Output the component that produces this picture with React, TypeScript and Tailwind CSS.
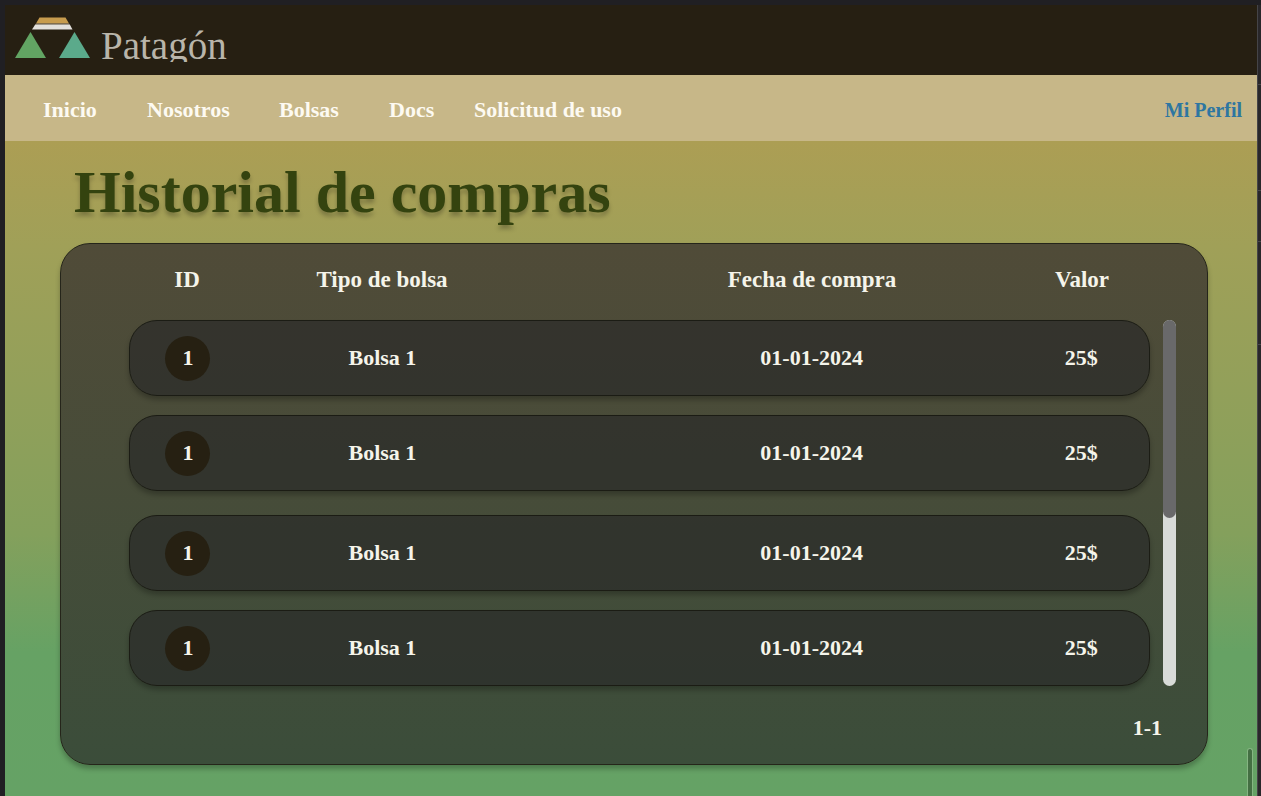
import React from "react";

type Purchase = { id: number; bag: string; date: string; value: string };

const purchase: Purchase = { id: 1, bag: "Bolsa 1", date: "01-01-2024", value: "25$" };
const groups: Purchase[][] = [
  [purchase, purchase],
  [purchase, purchase],
];

const links = ["Inicio", "Nosotros", "Bolsas", "Docs", "Solicitud de uso"];

const rowGrid = "grid grid-cols-[116fr_365fr_404fr_136fr] items-center text-center";

function Logo() {
  return (
    <svg width="76" height="42" viewBox="0 0 76 42" aria-hidden="true">
      <path d="M24.5 0.5H50.5L54 6.5H21Z" fill="#c79c4e" />
      <path d="M21 6.5H54L54.6 7.6H20.4Z" fill="#8d8069" />
      <path d="M20.2 7.6H54.8L57.5 12.5H17Z" fill="#e2e0dc" />
      <path d="M15.5 15L31 41H0Z" fill="#62a463" />
      <path d="M59.5 15L75 41H44Z" fill="#5baa8b" />
    </svg>
  );
}

function Header() {
  return (
    <header>
      <div className="flex h-[70px] items-start bg-[#261f12] pt-3 pl-[10px]">
        <a href="#" className="flex items-start gap-[10px]">
          <Logo />
          <span className="h-[45px] overflow-hidden pt-2 text-[39px] leading-[42px] text-[#b9b5aa]">
            Patagón
          </span>
        </a>
      </div>
      <nav className="flex h-[66px] items-center justify-between bg-[#c7b788] pt-[3px] pr-[15px] pl-[38px] font-bold">
        <ul className="grid grid-cols-[104px_132px_110px_85px_auto] text-[22px] text-[#fdfaf2]">
          {links.map((l) => (
            <li key={l}>
              <a href="#">{l}</a>
            </li>
          ))}
        </ul>
        <a href="#" className="text-[20px] text-[#2e76a1]">
          Mi Perfil
        </a>
      </nav>
    </header>
  );
}

function PurchaseRow({ item }: { item: Purchase }) {
  return (
    <tr
      className={`${rowGrid} h-[76px] rounded-[28px] border border-[#1b1c14] bg-[#292828]/67 shadow-[0_4px_5px_rgba(0,0,0,0.25)]`}
    >
      <td className="flex justify-center">
        <span className="flex size-[45px] items-center justify-center rounded-full bg-[#262012]">
          {item.id}
        </span>
      </td>
      <td className="pr-[91px]">{item.bag}</td>
      <td>{item.date}</td>
      <td>{item.value}</td>
    </tr>
  );
}

function History() {
  return (
    <section className="mr-[49px] ml-[55px] rounded-[30px] border border-[#25251a] bg-linear-to-b from-[#504b38] to-[#3b4d3a] text-[22px] leading-7 font-bold text-[#f5f4ea] shadow-[0_4px_5px_rgba(0,0,0,0.25)]">
      <div className="flex gap-[13px] pr-[31px] pl-[68px]">
        <table className="flex flex-1 flex-col" aria-labelledby="history-title">
          <thead className="block h-[76px] pb-1 text-[23px]">
            <tr className={`${rowGrid} h-full`}>
              <th scope="col">ID</th>
              <th scope="col" className="pr-[91px]">
                Tipo de bolsa
              </th>
              <th scope="col">Fecha de compra</th>
              <th scope="col">Valor</th>
            </tr>
          </thead>
          {groups.map((group, g) => (
            <tbody key={g} className="flex flex-col gap-[19px] not-last:mb-6">
              {group.map((item, i) => (
                <PurchaseRow key={i} item={item} />
              ))}
            </tbody>
          ))}
        </table>
        <div className="mt-[76px] w-[13px] rounded-full bg-[#d8dbd8]">
          <div className="h-[54%] rounded-full bg-[#69696a]" />
        </div>
      </div>
      <p className="pt-7 pr-[45px] pb-[22px] text-right">1-1</p>
    </section>
  );
}

export default function App() {
  return (
    <div className="relative flex min-h-screen bg-[#201f23] pt-[5px] pl-[5px] font-['Liberation_Serif',serif]">
      <div className="flex flex-1 flex-col">
        <Header />
        <main className="flex-1 bg-[linear-gradient(180deg,#ac9e54_0%,#a0a058_16%,#84a05c_60%,#66a264_78%,#65a265_100%)] pb-[31px]">
          <h1
            id="history-title"
            className="pl-[69px] text-[60px] leading-[102px] font-bold text-[#34430f] [text-shadow:0_4px_4px_rgba(0,0,0,0.25)]"
          >
            Historial de compras
          </h1>
          <History />
        </main>
      </div>
      <div className="flex w-1 flex-col border-l border-[#454447] bg-[#29272a]">
        <div className="h-20 border-b border-[#4a494c]" />
        <div className="h-[106px] border-b border-[#4a494c]" />
        <div className="h-[51px] border-b border-[#4a494c]" />
        <div className="h-[103px] border-b border-[#4a494c]" />
      </div>
      <div className="absolute right-2 bottom-0 h-12 w-[6px] rounded-t-full border border-b-0 border-[#86b583] bg-[#446f43]" />
    </div>
  );
}
